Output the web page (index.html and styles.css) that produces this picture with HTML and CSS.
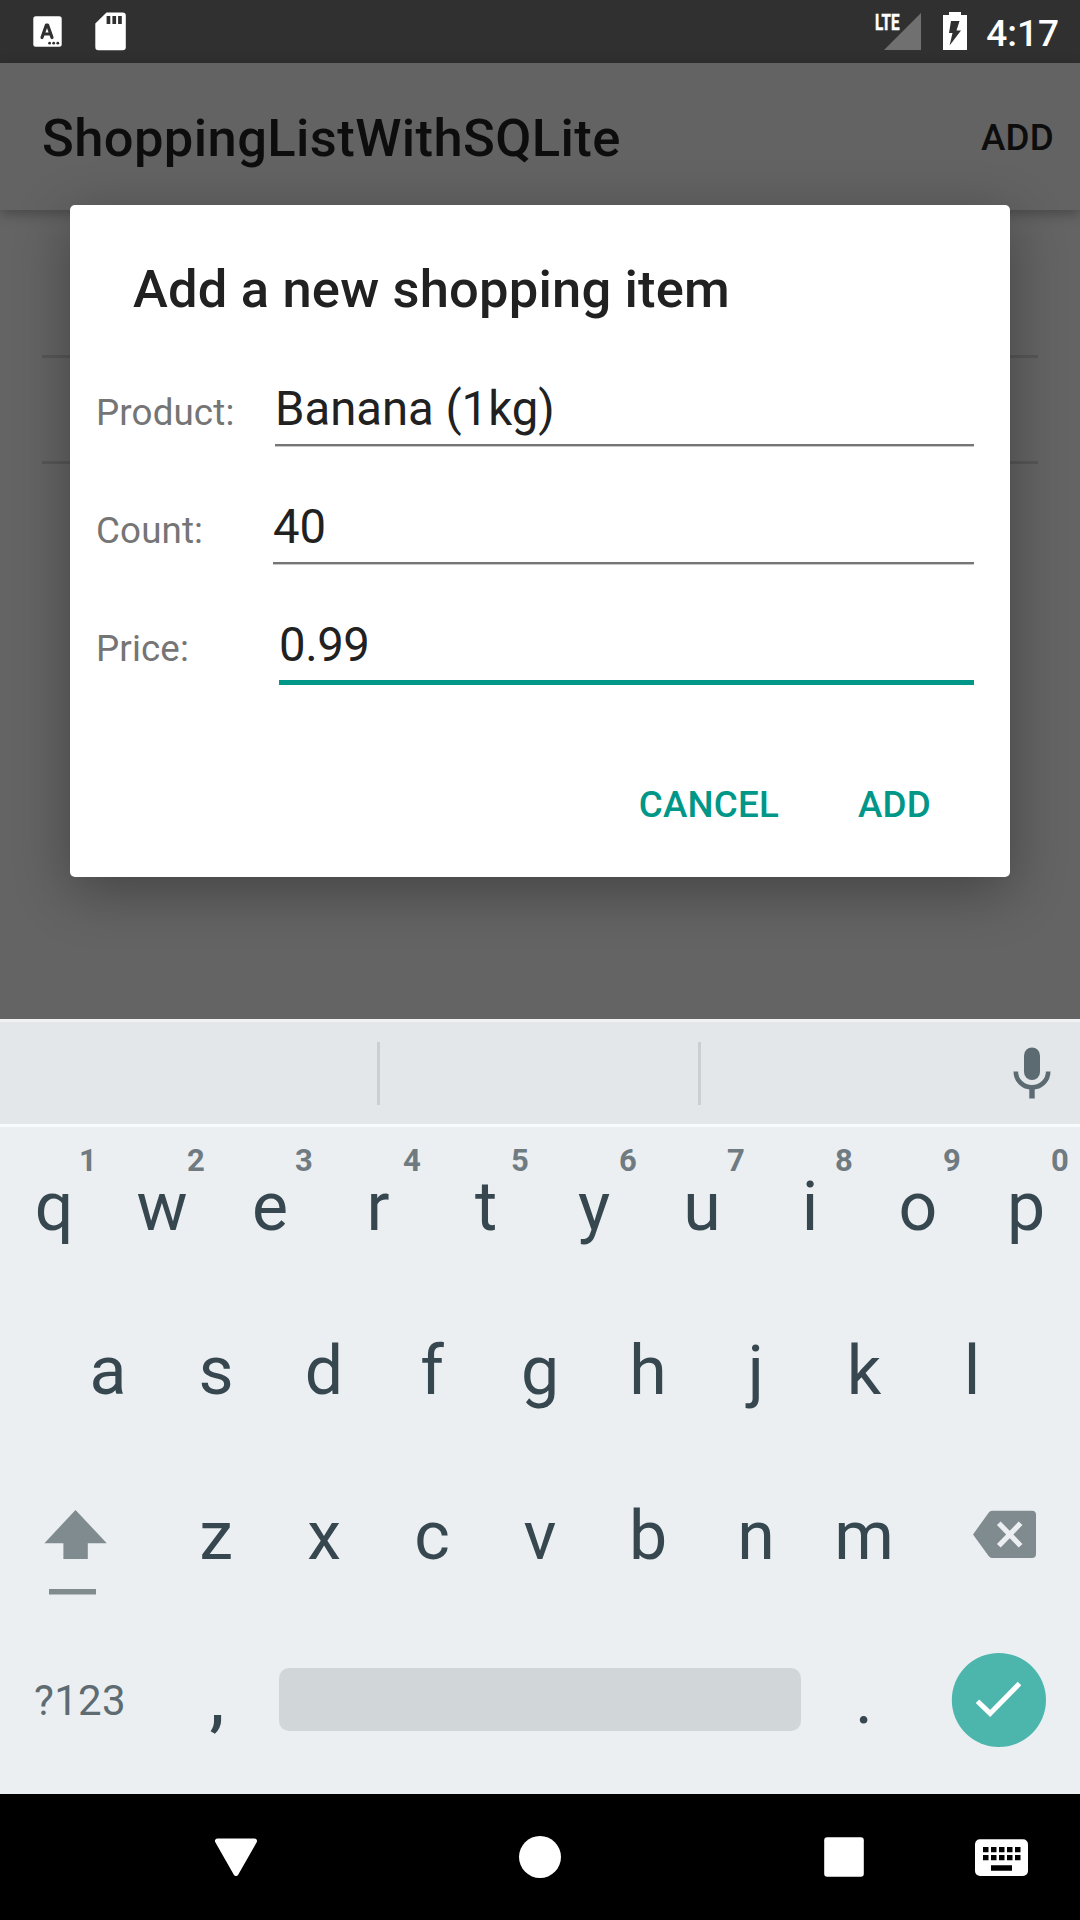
FILE: index.html
```html
<!DOCTYPE html>
<html lang="en">
<head>
<meta charset="utf-8">
<title>ShoppingListWithSQLite</title>
<link rel="stylesheet" href="styles.css">
</head>
<body>
<div class="screen">
  <main class="app">
    <header class="status-bar">
      <div class="status-left">
        <svg width="30" height="32" viewBox="0 0 30 32"><rect x=".3" y=".3" width="28.4" height="30.4" rx="2.5" fill="#fff"/><path d="M9 21.5 13.4 9h1.2L19 21.5M10.7 18h6.6" fill="none" stroke="#303030" stroke-width="3.2" stroke-linecap="round" stroke-linejoin="round"/><g fill="#303030"><circle cx="16.6" cy="27.2" r="1.4"/><circle cx="20.7" cy="27.2" r="1.4"/><circle cx="24.8" cy="27.2" r="1.4"/></g></svg>
        <svg width="31" height="39" viewBox="0 0 31 39"><path d="M11.5.4H27.6Q30.8.4 30.8 3.6V35Q30.8 38.2 27.6 38.2H3.4Q.3 38.2.3 35V11.4Z" fill="#fff"/><path d="M11.6 4h3.7v8h-3.7zM17.4 4h3.7v8h-3.7zM23.1 4h3.7v8h-3.7z" fill="#303030"/></svg>
      </div>
      <div class="status-right">
        <svg class="signal" width="47" height="38" viewBox="0 0 47 38"><path d="M46 1v37H9Z" fill="#707070"/><text x="0" y="17.8" textLength="24.5" lengthAdjust="spacingAndGlyphs" class="lte">LTE</text></svg>
        <svg class="battery" width="24" height="38" viewBox="0 0 24 38"><path d="M6 0h12v3h6v35H0V3h6z" fill="#fff"/><path d="M8 9h8.5l-3 9.5H18L6.6 33.5 9.5 21H6z" fill="#303030"/></svg>
        <span class="clock">4:17</span>
      </div>
    </header>
    <div class="app-bar">
      <h1 class="app-title">ShoppingListWithSQLite</h1>
      <span class="app-action">ADD</span>
    </div>
    <div class="list">
      <div class="list-item first"></div>
      <div class="list-item"></div>
    </div>
    <section class="dialog">
      <h2 class="dialog-title">Add a new shopping item</h2>
      <div class="form">
        <div class="row"><span class="label product">Product:</span><span class="field">Banana (1kg)</span></div>
        <div class="row"><span class="label count">Count:</span><span class="field">40</span></div>
        <div class="row"><span class="label price">Price:</span><span class="field focused">0.99</span></div>
      </div>
      <div class="actions"><span>CANCEL</span><span>ADD</span></div>
    </section>
  </main>

  <section class="keyboard">
    <div class="suggestions">
      <span></span><span></span>
      <span class="mic"><svg width="38" height="52" viewBox="0 0 38 52"><rect x="11" y="0.500" width="16" height="32.500" rx="8" fill="#5c6a71"/><path d="M2.800 24.500c0 9 7.200 15.800 16.200 15.800s16.200-6.800 16.200-15.800" fill="none" stroke="#5c6a71" stroke-width="4.600"/><path d="M16.300 41h5.400v10.500h-5.400z" fill="#5c6a71"/></svg></span>
    </div>
    <div class="keys">
      <div class="key-row top">
        <span class="key">q<b>1</b></span><span class="key">w<b>2</b></span><span class="key">e<b>3</b></span><span class="key">r<b>4</b></span><span class="key">t<b>5</b></span><span class="key">y<b>6</b></span><span class="key">u<b>7</b></span><span class="key">i<b>8</b></span><span class="key">o<b>9</b></span><span class="key">p<b>0</b></span>
      </div>
      <div class="key-row">
        <span class="key">a</span><span class="key">s</span><span class="key">d</span><span class="key">f</span><span class="key">g</span><span class="key">h</span><span class="key">j</span><span class="key">k</span><span class="key">l</span>
      </div>
      <div class="key-row">
        <span class="key side"><svg width="162" height="165" viewBox="0 1453 162 165"><path d="M75.500 1510 106.800 1543.200H87.800V1559H63.400V1543.200H44.400Z" fill="#808b8f"/><path d="M49 1589h47v5.600H49z" fill="#808b8f"/></svg></span>
        <span class="key">z</span><span class="key">x</span><span class="key">c</span><span class="key">v</span><span class="key">b</span><span class="key">n</span><span class="key">m</span>
        <span class="key side"><svg width="162" height="165" viewBox="918 1453 162 165"><path d="M992 1510.700h40q4 0 4 4v39.300q0 4-4 4h-40q-2 0-3.200-1.800L973 1534.400l15.800-21.900q1.200-1.800 3.200-1.800z" fill="#808b8f"/><path d="M998.800 1523.300l21.800 22.400M1020.600 1523.300l-21.800 22.400" stroke="#ebeff2" stroke-width="5.200"/></svg></span>
      </div>
      <div class="key-row bottom">
        <span class="key symbols">?123</span>
        <span class="key comma">,</span>
        <span class="space"></span>
        <span class="key">.</span>
        <span class="key side"><svg width="162" height="165" viewBox="918 1618 162 165"><circle cx="998.900" cy="1700" r="47.100" fill="#4db6ac"/><path d="M977.500 1701.300 990.100 1713.400 1019.500 1683.600" fill="none" stroke="#fff" stroke-width="5"/></svg></span>
      </div>
    </div>
  </section>

  <nav class="nav-bar">
    <svg width="1080" height="126" viewBox="0 1794 1080 126"><path d="M217.500 1841h37L236 1873.500Z" fill="#fff" stroke="#fff" stroke-width="5" stroke-linejoin="round"/><circle cx="540" cy="1857" r="21" fill="#fff"/><rect x="824.200" y="1837.200" width="39.600" height="39.600" rx="3" fill="#fff"/><rect x="975" y="1839.300" width="53" height="36.700" rx="5" fill="#fff"/><path d="M983 1847h5.500v5.300h-5.500zM991 1847h5.500v5.300h-5.500zM999 1847h5.500v5.300h-5.500zM1007 1847h5.500v5.300h-5.500zM1015 1847h5.500v5.300h-5.500zM983 1855h5.500v5.300h-5.500zM991 1855h5.500v5.300h-5.500zM999 1855h5.500v5.300h-5.500zM1007 1855h5.500v5.300h-5.500zM1015 1855h5.500v5.300h-5.500zM991 1865.300h21v5.400h-21z"/></svg>
  </nav>
</div>
</body>
</html>
```
FILE: styles.css
```css
* { box-sizing: border-box; }
body { margin: 0; font-family: Roboto, "Liberation Sans", sans-serif; }
svg { display: block; }
h1, h2 { margin: 0; font-weight: 500; }

.screen { width: 1080px; height: 1920px; display: flex; flex-direction: column; overflow: hidden; }

.app { position: relative; height: 1019px; background: #646464; overflow: hidden; }

.status-bar { height: 63px; background: #303030; display: flex; justify-content: space-between; }
.status-left { display: flex; align-items: flex-start; gap: 32px; padding: 16px 0 0 33px; }
.status-left svg + svg { margin-top: -4px; }
.status-right { display: flex; align-items: flex-start; padding-right: 21px; }
.signal { margin: 12px 21px 0 0; overflow: visible; }
.battery { margin: 12px 19px 0 0; }
.lte { font: 700 22px Roboto, sans-serif; fill: #fff; stroke: #fff; stroke-width: .5px; }
.clock { font-size: 37px; font-weight: 500; line-height: 67px; color: #fff; }

.app-bar { position: relative; height: 147px; padding: 0 26px 0 42px; display: flex; align-items: center; justify-content: space-between; background: #636363; box-shadow: 0 4px 12px rgba(0, 0, 0, .28); color: #0d0d0d; }
.app-title { font-size: 52.5px; letter-spacing: .4px; padding-top: 3px; }
.app-action { font-size: 36.75px; font-weight: 500; letter-spacing: .2px; padding-top: 1px; }

.list { padding: 0 42px; }
.list-item { height: 106px; border-bottom: 3px solid #575757; }
.list-item.first { height: 148px; }

/* The dialog floats above the list */
.dialog { position: absolute; left: 70px; top: 205px; width: 940px; height: 672px; padding-top: 47px; background: #fff; border-radius: 5px; box-shadow: 0 14px 56px rgba(0, 0, 0, .33); color: #212121; }
.dialog-title { padding-left: 63px; font-size: 52.5px; line-height: 74px; letter-spacing: .18px; }
.form { display: flex; flex-direction: column; gap: 53px; padding: 55px 36px 0 26px; }
.row { display: flex; align-items: baseline; height: 65px; }
.label { flex: none; color: #757575; font-size: 36.75px; letter-spacing: .13px; }
.label.product { width: 179px; }
.label.count { width: 177px; }
.label.price { width: 183px; }
.field { flex: 1; font-size: 47.25px; line-height: 56px; padding-bottom: 7px; border-bottom: 2px solid #757575; box-shadow: 0 1px #c8c8c8; }
.field.focused { border-bottom: 5px solid #009688; box-shadow: none; letter-spacing: -.4px; }
.actions { display: flex; justify-content: flex-end; gap: 79px; padding-right: 79px; margin-top: 98px; color: #009688; font-size: 36.75px; font-weight: 500; letter-spacing: .2px; line-height: 50px; }

.keyboard { height: 775px; background: #ebeff2; }
.suggestions { display: grid; grid-template-columns: 380px 321px 1fr; align-items: center; height: 108px; border-top: 3px solid #f1f2f4; border-bottom: 3px solid #f8fafb; background: #e3e7ea; }
.suggestions span { height: 63px; border-right: 3px solid #cacfd2; }
.suggestions .mic { display: flex; align-items: center; justify-content: flex-end; border: 0; padding-right: 29px; }

.keys { color: #37474f; font-size: 68px; }
.key-row { display: flex; justify-content: center; height: 165px; line-height: 167px; }
.key-row.top { height: 161px; line-height: 160px; }
.key-row.bottom { line-height: 165px; }
.key { position: relative; width: 108px; text-align: center; }
.key b { position: absolute; left: 78px; top: 18px; width: 20px; font-size: 31px; line-height: 31px; color: #6f7b81; }
.key.side { width: 162px; }
.key.symbols { width: 162px; padding-right: 2px; font-size: 42px; letter-spacing: .3px; color: #5e6c72; }
.key.comma { padding-left: 2px; font-weight: 500; }
.space { width: 522px; height: 63px; margin: 50px 9px 0; border-radius: 10px; background: #d1d6d9; }

.nav-bar { height: 126px; background: #000; }
```
